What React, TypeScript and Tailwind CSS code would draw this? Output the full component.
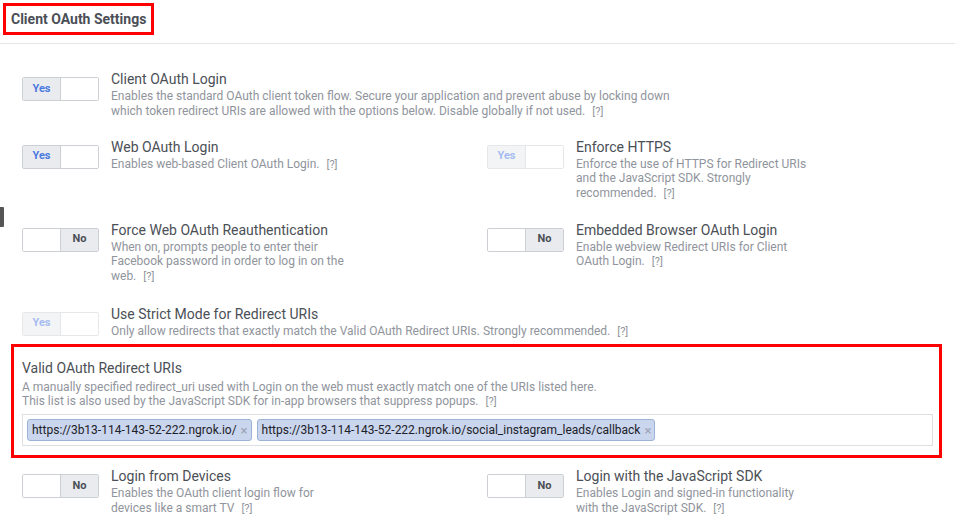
import React from "react";

type ToggleProps = { on: boolean; disabled?: boolean };

const Toggle = ({ on, disabled }: ToggleProps) => {
  return (
    <div
      className={`flex h-[24px] w-[77px] shrink-0 overflow-hidden rounded-[2px] border border-[#ccd0d5] text-[11px] font-bold ${
        disabled ? "opacity-50" : ""
      }`}
    >
      {on ? (
        <>
          <div className="flex w-[38px] items-center justify-center border-r border-[#ccd0d5] bg-[#e9ebee] text-[#4a7ae0]">
            Yes
          </div>
          <div className="flex-1 bg-white" />
        </>
      ) : (
        <>
          <div className="flex-1 bg-white" />
          <div className="flex w-[38px] items-center justify-center border-l border-[#ccd0d5] bg-[#e9ebee] text-[#4b4f56]">
            No
          </div>
        </>
      )}
    </div>
  );
};

const Help = () => <span className="ml-[7px] text-[11px] leading-[14px] text-[#90949c]">[?]</span>;

type SettingProps = {
  on: boolean;
  disabled?: boolean;
  title: string;
  desc: string;
  wide?: boolean;
};

const Setting = ({ on, disabled, title, desc, wide }: SettingProps) => {
  return (
    <div className="flex items-start">
      <div className="mt-[8px]">
        <Toggle on={on} disabled={disabled} />
      </div>
      <div className="ml-[12px]">
        <div className="text-[14px] leading-[20px] text-[#4b4f56]">{title}</div>
        <div className={`text-[12px] leading-[14.5px] text-[#90949c] ${wide ? "max-w-[575px]" : "max-w-[240px]"}`}>
          {desc}
          <Help />
        </div>
      </div>
    </div>
  );
};

const Chip = ({ url }: { url: string }) => (
  <div className="flex h-[22px] items-center rounded-[3px] border border-[#9cb4d8] bg-[#c9d6ed] pl-[4px] pr-[3px] text-[12px] text-[#1d2129]">
    {url}
    <span className="ml-[4px] text-[13px] leading-none text-[#9aa3b4]">×</span>
  </div>
);

export default function App() {
  return (
    <div className="relative h-[530px] w-[955px] overflow-hidden bg-white font-['Roboto',sans-serif]">
      {/* Header */}
      <div className="h-[44px] border-b border-[#e5e5e5] pl-[3px] pt-[3px]">
        <div className="flex h-[32px] w-[151px] items-center border-[3px] border-[#ff0000] pl-[5px] text-[14px] font-bold text-[#4b4f56]">
          Client OAuth Settings
        </div>
      </div>

      {/* left edge handle */}
      <div className="absolute left-0 top-[207px] h-[20px] w-[4px] rounded-r-[1px] bg-[#555]" />

      <div className="pl-[22px] pt-[25px]">
        <Setting
          on
          wide
          title="Client OAuth Login"
          desc="Enables the standard OAuth client token flow. Secure your application and prevent abuse by locking down which token redirect URIs are allowed with the options below. Disable globally if not used."
        />

        <div className="mt-[18px] grid grid-cols-[465px_1fr]">
          <Setting on title="Web OAuth Login" desc="Enables web-based Client OAuth Login." />
          <Setting
            on
            disabled
            title="Enforce HTTPS"
            desc="Enforce the use of HTTPS for Redirect URIs and the JavaScript SDK. Strongly recommended."
          />
        </div>

        <div className="mt-[19px] grid grid-cols-[465px_1fr]">
          <Setting
            on={false}
            title="Force Web OAuth Reauthentication"
            desc="When on, prompts people to enter their Facebook password in order to log in on the web."
          />
          <Setting
            on={false}
            title="Embedded Browser OAuth Login"
            desc="Enable webview Redirect URIs for Client OAuth Login."
          />
        </div>

        <div className="mt-[20px]">
          <Setting
            on
            disabled
            wide
            title="Use Strict Mode for Redirect URIs"
            desc="Only allow redirects that exactly match the Valid OAuth Redirect URIs. Strongly recommended."
          />
        </div>
      </div>

      {/* Valid OAuth Redirect URIs */}
      <div className="ml-[11px] mt-[5px] w-[931px] border-[3px] border-[#ff0000] pb-[9px] pl-[8px] pr-[6px] pt-[11px]">
        <div className="text-[14px] leading-[20px] text-[#4b4f56]">Valid OAuth Redirect URIs</div>
        <div className="mt-[2px] text-[12px] leading-[14.5px] text-[#90949c]">
          A manually specified redirect_uri used with Login on the web must exactly match one of the URIs listed here.
          <br />
          This list is also used by the JavaScript SDK for in-app browsers that suppress popups.
          <Help />
        </div>
        <div className="mt-[5px] flex h-[32px] items-center gap-[5px] border border-[#dddfe2] px-[4px]">
          <Chip url="https://3b13-114-143-52-222.ngrok.io/" />
          <Chip url="https://3b13-114-143-52-222.ngrok.io/social_instagram_leads/callback" />
        </div>
      </div>

      <div className="mt-[8px] grid grid-cols-[465px_1fr] pl-[22px]">
        <Setting
          on={false}
          title="Login from Devices"
          desc="Enables the OAuth client login flow for devices like a smart TV"
        />
        <Setting
          on={false}
          title="Login with the JavaScript SDK"
          desc="Enables Login and signed-in functionality with the JavaScript SDK."
        />
      </div>
    </div>
  );
}
